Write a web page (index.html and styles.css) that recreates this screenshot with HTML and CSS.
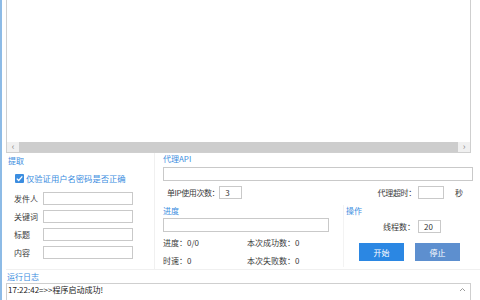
FILE: index.html
```html
<!DOCTYPE html>
<html lang="zh-CN">
<head>
  <meta charset="UTF-8">
  <title>邮件提取</title>
  <link rel="stylesheet" href="styles.css">
</head>
<body>
  <div class="app">
    <div class="list">
      <div class="list-body"></div>
      <div class="hscroll">
        <span class="arrow">&lsaquo;</span>
        <div class="thumb"></div>
        <span class="arrow">&rsaquo;</span>
      </div>
    </div>

    <div class="middle">
      <section class="fetch">
        <div class="group-title">提取</div>
        <label class="check">
          <span class="box">
            <svg width="9" height="9" viewBox="0 0 9 9"><path d="M1.8 4.6 L3.7 6.5 L7.3 2.4" fill="none" stroke="#fff" stroke-width="1.3"/></svg>
          </span>
          仅验证用户名密码是否正确
        </label>
        <div class="field"><span class="field-label">发件人</span><input class="text-input" type="text"></div>
        <div class="field"><span class="field-label">关键词</span><input class="text-input" type="text"></div>
        <div class="field"><span class="field-label">标题</span><input class="text-input" type="text"></div>
        <div class="field"><span class="field-label">内容</span><input class="text-input" type="text"></div>
      </section>

      <section class="settings">
        <div class="group-title">代理API</div>
        <input class="text-input api-input" type="text">
        <div class="proxy-row">
          <span class="ip-label">单IP使用次数：</span>
          <input class="text-input small-input" type="text" value="3">
          <span class="spacer"></span>
          <span class="timeout-label">代理超时：</span>
          <input class="text-input timeout-input" type="text">
          <span class="unit">秒</span>
        </div>

        <div class="lower">
          <div class="progress">
            <div class="group-title">进度</div>
            <div class="progress-bar"></div>
            <div class="stats">
              <span>进度：0/0</span>
              <span>本次成功数：0</span>
            </div>
            <div class="stats">
              <span>时速：0</span>
              <span>本次失败数：0</span>
            </div>
          </div>
          <div class="ops">
            <div class="group-title">操作</div>
            <div class="thread-row">
              <span>线程数：</span>
              <input class="text-input small-input" type="text" value="20">
            </div>
            <div class="buttons">
              <button class="btn btn-start">开始</button>
              <button class="btn btn-stop">停止</button>
            </div>
          </div>
        </div>
      </section>
    </div>

    <div class="group-title log-title">运行日志</div>
    <div class="log">
      <div class="log-line">17:22:42=&gt;&gt;程序启动成功!</div>
      <svg class="log-up" width="7" height="5" viewBox="0 0 7 5"><path d="M1 4 L3.5 1.5 L6 4" fill="none" stroke="#9a9a9a" stroke-width="1"/></svg>
    </div>
  </div>
</body>
</html>
```

FILE: styles.css
```css
* {
  margin: 0;
  padding: 0;
  box-sizing: border-box;
}

body {
  width: 480px;
  height: 300px;
  overflow: hidden;
  background-color: #ffffff;
  border-left: 2px solid #8dbbe6;
  font-family: "Noto Sans CJK SC", "Liberation Sans", sans-serif;
  font-size: 8px;
  color: #3a3a3a;
  white-space: nowrap;
}

.app {
  padding-left: 4px;
}

.list {
  width: 465px;
  height: 153px;
  border: 1px solid #cfcfcf;
  border-top: none;
  display: flex;
  flex-direction: column;
}

.list-body {
  flex-grow: 1;
}

.hscroll {
  height: 10px;
  display: flex;
  align-items: center;
  background-color: #f0f0f0;
}

.arrow {
  width: 12px;
  text-align: center;
  color: #8a8a8a;
  font-size: 9px;
  line-height: 10px;
}

.thumb {
  flex-grow: 1;
  height: 10px;
  background-color: #cdcdcd;
}

.middle {
  display: flex;
  height: 117px;
  border-bottom: 1px solid #f0f0f0;
}

.group-title {
  color: #3b8de0;
  height: 12px;
  line-height: 12px;
}

.fetch {
  width: 149px;
  padding: 2px 0 0 2px;
  border-right: 1px solid #f0f0f0;
}

.check {
  display: flex;
  align-items: center;
  gap: 2px;
  margin: 5px 0 0 7px;
  height: 12px;
  color: #3b8de0;
  font-size: 8.3px;
}

.box {
  width: 9px;
  height: 9px;
  background-color: #3b8de0;
  border-radius: 1px;
  display: flex;
}

.field {
  display: flex;
  align-items: center;
  margin-top: 5px;
  padding-left: 6px;
}

.check + .field {
  margin-top: 8px;
}

.field-label {
  width: 29px;
}

.text-input {
  height: 13px;
  border: 1px solid #c9c9c9;
  background-color: #ffffff;
  font-family: inherit;
  font-size: 8px;
  color: #333;
  padding: 0 5px;
  outline: none;
}

.field .text-input {
  width: 90px;
}

.settings {
  width: 310px;
  margin-left: 8px;
}

.api-input {
  display: block;
  width: 310px;
  height: 14px;
  margin-top: 2px;
}

.proxy-row {
  display: flex;
  align-items: center;
  margin-top: 5px;
  padding-right: 10px;
}

.ip-label {
  margin-left: 4px;
  letter-spacing: -0.4px;
}

.small-input {
  width: 23px;
}

.spacer {
  flex-grow: 1;
}

.timeout-label {
  letter-spacing: -0.3px;
}

.timeout-input {
  width: 26px;
  margin-left: 2px;
}

.unit {
  margin-left: 11px;
}

.lower {
  display: flex;
  margin-top: 6px;
}

.progress {
  width: 166px;
}

.progress-bar {
  height: 14px;
  border: 1px solid #c9c9c9;
  margin-top: 1px;
}

.stats {
  display: grid;
  grid-template-columns: 84px 1fr;
  height: 12px;
  line-height: 12px;
  margin-top: 5px;
}

.stats + .stats {
  margin-top: 6px;
}

.ops {
  margin-left: 14px;
  width: 130px;
  padding-left: 2px;
  border-left: 1px solid #f3f3f3;
}

.thread-row {
  display: flex;
  align-items: center;
  margin: 3px 0 0 37px;
  gap: 3px;
}

.buttons {
  display: flex;
  gap: 11px;
  margin: 10px 0 0 13px;
}

.btn {
  width: 45px;
  height: 18px;
  border: none;
  color: #ffffff;
  font-family: inherit;
  font-size: 8px;
}

.btn-start {
  background-color: #2b87e3;
}

.btn-stop {
  background-color: #5d8fcf;
}

.log-title {
  margin: 1px 0 0 1px;
}

.log {
  position: relative;
  width: 465px;
  height: 17px;
  border: 1px solid #cfcfcf;
  border-bottom: none;
}

.log-line {
  padding-left: 1px;
  line-height: 10px;
  margin-top: 1px;
  color: #222;
}

.log-up {
  position: absolute;
  right: 4px;
  top: 3px;
}
```
